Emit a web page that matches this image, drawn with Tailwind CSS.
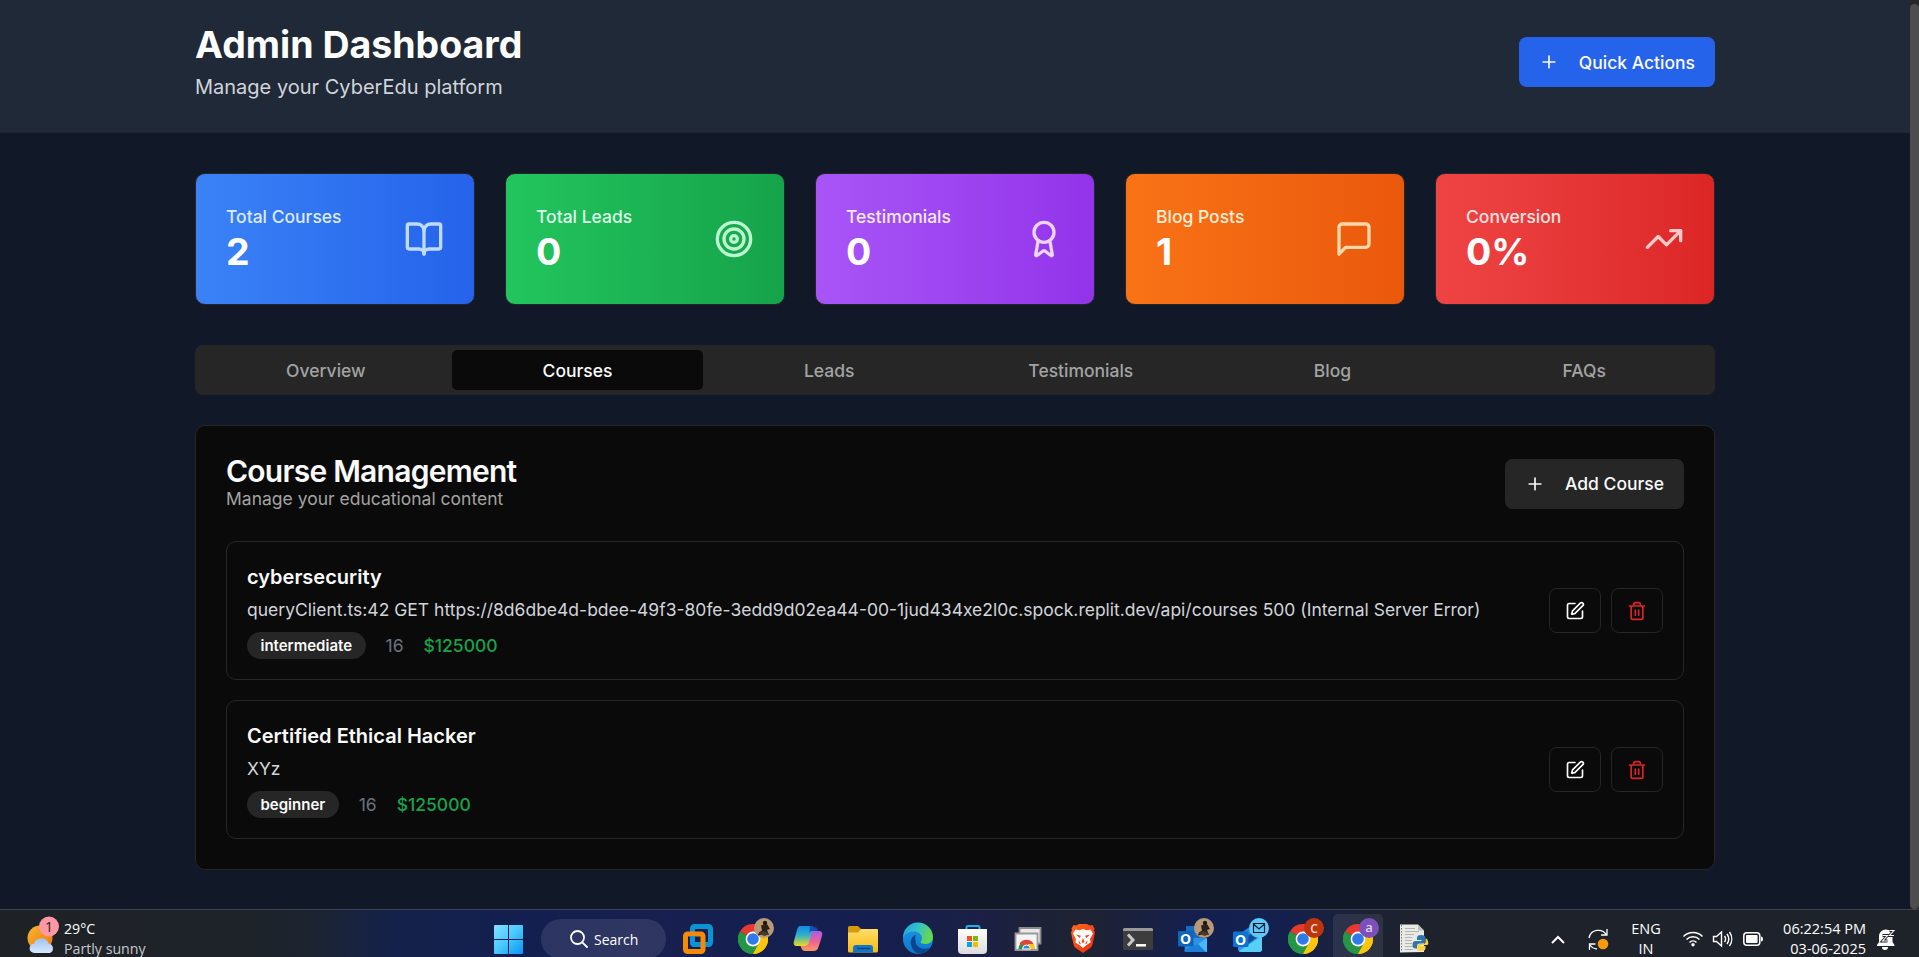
<!DOCTYPE html>
<html lang="en">
<head>
<meta charset="utf-8">
<title>Admin Dashboard</title>
<script src="https://cdn.jsdelivr.net/npm/@tailwindcss/browser@4"></script>
</head>
<body class="w-[1919px] h-[957px] overflow-hidden bg-[#111827] font-['Inter',sans-serif] text-[17.5px] leading-[25px] text-[#fafafa] flex flex-col">
<svg class="absolute size-0" aria-hidden="true">
  <defs>
    <symbol id="plus" viewBox="0 0 24 24"><path d="M5 12h14M12 5v14"/></symbol>
    <symbol id="edit" viewBox="0 0 24 24"><path d="M12 3H5a2 2 0 0 0-2 2v14a2 2 0 0 0 2 2h14a2 2 0 0 0 2-2v-7"/><path d="M18.375 2.625a1 1 0 0 1 3 3l-9.013 9.014a2 2 0 0 1-.853.505l-2.873.84a.5.5 0 0 1-.62-.62l.84-2.873a2 2 0 0 1 .506-.852z"/></symbol>
    <symbol id="trash" viewBox="0 0 24 24"><path d="M3 6h18M19 6v14c0 1-1 2-2 2H7c-1 0-2-1-2-2V6M8 6V4c0-1 1-2 2-2h4c1 0 2 1 2 2v2M10 11v6M14 11v6"/></symbol>
    <symbol id="chrome" viewBox="0 0 30 30">
      <path d="M15 15 2 7.5A15 15 0 0 1 28 7.5Z" fill="#e8392e"/>
      <path d="M15 15 28 7.5A15 15 0 0 1 15 30Z" fill="#fdc60b"/>
      <path d="M15 15 15 30A15 15 0 0 1 2 7.5Z" fill="#259645"/>
      <path d="M15 7.8H28.2A15 15 0 0 1 15 30L21.2 18.600Z" fill="#fdc60b"/>
      <path d="M2 7.5 8.800 18.600A7.200 7.200 0 0 0 21.200 18.600L15 30A15 15 0 0 1 2 7.500Z" fill="#259645"/>
      <circle cx="15" cy="15" r="7.400" fill="#fff"/><circle cx="15" cy="15" r="5.800" fill="#2f7ae8"/>
    </symbol>
    <symbol id="avatar" viewBox="0 0 20 20"><circle cx="10" cy="10" r="10" fill="#b99a78"/><circle cx="11" cy="5" r="2.200" fill="#1d1712"/><path d="M7 7.500 13 6l3 5-3 1 2 5-5-1-6 1.500 1-3 3-2z" fill="#2b211a"/><path d="M4 15.500 10 13l5 3-4 2z" fill="#4b3a2c"/></symbol>
    <linearGradient id="win" gradientUnits="userSpaceOnUse" x1="10" y1="15" x2="39" y2="44"><stop stop-color="#86e0ff"/><stop offset=".5" stop-color="#48c8fc"/><stop offset="1" stop-color="#0a93f5"/></linearGradient>
    <linearGradient id="cpA" x2="0" y2="1"><stop stop-color="#1487e8"/><stop offset=".45" stop-color="#2cb1c9"/><stop offset="1" stop-color="#f1d81e"/></linearGradient>
    <linearGradient id="cpB" x2="0" y2="1"><stop stop-color="#a55be8"/><stop offset=".5" stop-color="#ee5f9c"/><stop offset="1" stop-color="#fb9a5a"/></linearGradient>
    <linearGradient id="fold" x2="0" y2="1"><stop stop-color="#ffdd66"/><stop offset="1" stop-color="#f7b916"/></linearGradient>
    <linearGradient id="edgeA" x2="1" y2=".4"><stop stop-color="#1d9be8"/><stop offset=".5" stop-color="#35c1c9"/><stop offset="1" stop-color="#65d84e"/></linearGradient>
    <linearGradient id="edgeB" x2="0" y2="1"><stop stop-color="#1b9be0"/><stop offset="1" stop-color="#0d74d0"/></linearGradient>
    <linearGradient id="bag" x2="0" y2="1"><stop stop-color="#fdfdfd"/><stop offset="1" stop-color="#dcdcdc"/></linearGradient>
    <linearGradient id="brave" x2="1" y2="1"><stop stop-color="#ff6a1f"/><stop offset="1" stop-color="#f5260c"/></linearGradient>
    <linearGradient id="sun" x2="1" y2="1"><stop stop-color="#f7b82a"/><stop offset="1" stop-color="#ef7412"/></linearGradient>
    <linearGradient id="cloud" x2="0" y2="1"><stop stop-color="#9fc4f5"/><stop offset="1" stop-color="#d8e8fc"/></linearGradient>
    <linearGradient id="ol" x2="1" y2="1"><stop stop-color="#1c6fd0"/><stop offset="1" stop-color="#45c3f7"/></linearGradient>
  </defs>
</svg>

<div class="flex h-[909px] shrink-0">
  <div class="w-[1910px] flex flex-col">
    <header class="h-[133px] bg-[#202937] border-b border-[#262626] px-[195px] pt-[22px]">
      <div class="flex items-center justify-between">
        <div>
          <h1 class="text-[37.500px] leading-[45px] font-bold text-white">Admin Dashboard</h1>
          <p class="mt-[5px] text-xl leading-[30px] text-[#d1d5db]">Manage your CyberEdu platform</p>
        </div>
        <button class="h-[50px] w-[196px] px-5 rounded-[7.500px] bg-[#2563eb] flex items-center justify-between font-medium">
          <svg class="size-5" fill="none" stroke="currentColor" stroke-width="2" stroke-linecap="round"><use href="#plus"/></svg><span class="pt-px">Quick Actions</span>
        </button>
      </div>
    </header>

    <main class="px-[195px] pt-10">
      <section class="grid grid-cols-5 gap-[30px]">
        <div class="h-[132px] rounded-[10px] border border-[#262626] bg-linear-to-r from-[#3b82f6] to-[#2563eb] px-[30px] flex items-center justify-between">
          <div><p class="font-medium text-[#dbeafe]">Total Courses</p><p class="text-[37.500px] leading-[45px] font-bold text-white">2</p></div>
          <svg class="size-10 text-[#bfdbfe]" viewBox="0 0 24 24" fill="none" stroke="currentColor" stroke-width="2" stroke-linecap="round" stroke-linejoin="round"><path d="M12 7v14"/><path d="M3 18a1 1 0 0 1-1-1V4a1 1 0 0 1 1-1h5a4 4 0 0 1 4 4 4 4 0 0 1 4-4h5a1 1 0 0 1 1 1v13a1 1 0 0 1-1 1h-6a3 3 0 0 0-3 3 3 3 0 0 0-3-3z"/></svg>
        </div>
        <div class="h-[132px] rounded-[10px] border border-[#262626] bg-linear-to-r from-[#22c55e] to-[#16a34a] px-[30px] flex items-center justify-between">
          <div><p class="font-medium text-[#dcfce7]">Total Leads</p><p class="text-[37.500px] leading-[45px] font-bold text-white">0</p></div>
          <svg class="size-10 text-[#bbf7d0]" viewBox="0 0 24 24" fill="none" stroke="currentColor" stroke-width="2"><circle cx="12" cy="12" r="10"/><circle cx="12" cy="12" r="6"/><circle cx="12" cy="12" r="2"/></svg>
        </div>
        <div class="h-[132px] rounded-[10px] border border-[#262626] bg-linear-to-r from-[#a855f7] to-[#9333ea] px-[30px] flex items-center justify-between">
          <div><p class="font-medium text-[#f3e8ff]">Testimonials</p><p class="text-[37.500px] leading-[45px] font-bold text-white">0</p></div>
          <svg class="size-10 text-[#e9d5ff]" viewBox="0 0 24 24" fill="none" stroke="currentColor" stroke-width="2" stroke-linecap="round" stroke-linejoin="round"><path d="m15.477 12.890 1.515 8.526a.5.5 0 0 1-.81.470l-3.580-2.687a1 1 0 0 0-1.197 0l-3.586 2.686a.5.5 0 0 1-.81-.469l1.514-8.526"/><circle cx="12" cy="8" r="6"/></svg>
        </div>
        <div class="h-[132px] rounded-[10px] border border-[#262626] bg-linear-to-r from-[#f97316] to-[#ea580c] px-[30px] flex items-center justify-between">
          <div><p class="font-medium text-[#ffedd5]">Blog Posts</p><p class="text-[37.500px] leading-[45px] font-bold text-white">1</p></div>
          <svg class="size-10 text-[#fed7aa]" viewBox="0 0 24 24" fill="none" stroke="currentColor" stroke-width="2" stroke-linecap="round" stroke-linejoin="round"><path d="M21 15a2 2 0 0 1-2 2H7l-4 4V5a2 2 0 0 1 2-2h14a2 2 0 0 1 2 2z"/></svg>
        </div>
        <div class="h-[132px] rounded-[10px] border border-[#262626] bg-linear-to-r from-[#ef4444] to-[#dc2626] px-[30px] flex items-center justify-between">
          <div><p class="font-medium text-[#fee2e2]">Conversion</p><p class="text-[37.500px] leading-[45px] font-bold text-white">0%</p></div>
          <svg class="size-10 text-[#fecaca]" viewBox="0 0 24 24" fill="none" stroke="currentColor" stroke-width="2" stroke-linecap="round" stroke-linejoin="round"><path d="m22 7-8.500 8.500-5-5L2 17"/><path d="M16 7h6v6"/></svg>
        </div>
      </section>

      <nav class="mt-10 h-[50px] p-[5px] rounded-[7.500px] bg-[#262626] grid grid-cols-6 text-center font-medium text-[#a3a3a3] leading-[42px]">
        <div>Overview</div>
        <div class="h-10 rounded-[5px] bg-[#0a0a0a] text-[#fafafa]">Courses</div>
        <div>Leads</div><div>Testimonials</div><div>Blog</div><div>FAQs</div>
      </nav>

      <section class="mt-[30px] h-[445px] rounded-[10px] border border-[#262626] bg-[#0a0a0a] p-[30px]">
        <div class="h-[55px] flex items-center justify-between">
          <div>
            <h2 class="text-[30px] leading-[30px] font-semibold tracking-tight">Course Management</h2>
            <p class="text-[#a3a3a3]">Manage your educational content</p>
          </div>
          <button class="h-[50px] w-[179px] px-5 rounded-[7.500px] bg-[#262626] flex items-center justify-between font-medium">
            <svg class="size-5" fill="none" stroke="currentColor" stroke-width="2" stroke-linecap="round"><use href="#plus"/></svg>Add Course
          </button>
        </div>
        <div class="mt-[30px] flex flex-col gap-5">
          <article class="h-[139px] rounded-[10px] border border-[#262626] p-5 flex items-center justify-between">
            <div>
              <h3 class="text-xl leading-[30px] font-semibold">cybersecurity</h3>
              <p class="mt-[5px] text-[#d1d5db]">queryClient.ts:42 GET https://8d6dbe4d-bdee-49f3-80fe-3edd9d02ea44-00-1jud434xe2l0c.spock.replit.dev/api/courses 500 (Internal Server Error)</p>
              <div class="mt-[10px] flex items-center gap-5">
                <span class="h-[27px] leading-[27px] px-[13.500px] rounded-full bg-[#262626] text-[15px] font-semibold">intermediate</span>
                <span class="text-[#6b7280]">16</span><span class="font-medium text-[#16a34a]">$125000</span>
              </div>
            </div>
            <div class="flex gap-[10px]">
              <button class="w-[52px] h-[45px] rounded-[7.500px] border border-[#262626] flex items-center justify-center"><svg class="size-5" fill="none" stroke="currentColor" stroke-width="2" stroke-linecap="round" stroke-linejoin="round"><use href="#edit"/></svg></button>
              <button class="w-[52px] h-[45px] rounded-[7.500px] border border-[#262626] flex items-center justify-center text-[#dc2626]"><svg class="size-5" fill="none" stroke="currentColor" stroke-width="2" stroke-linecap="round" stroke-linejoin="round"><use href="#trash"/></svg></button>
            </div>
          </article>
          <article class="h-[139px] rounded-[10px] border border-[#262626] p-5 flex items-center justify-between">
            <div>
              <h3 class="text-xl leading-[30px] font-semibold">Certified Ethical Hacker</h3>
              <p class="mt-[5px] text-[#d1d5db]">XYz</p>
              <div class="mt-[10px] flex items-center gap-5">
                <span class="h-[27px] leading-[27px] px-[13.500px] rounded-full bg-[#262626] text-[15px] font-semibold">beginner</span>
                <span class="text-[#6b7280]">16</span><span class="font-medium text-[#16a34a]">$125000</span>
              </div>
            </div>
            <div class="flex gap-[10px]">
              <button class="w-[52px] h-[45px] rounded-[7.500px] border border-[#262626] flex items-center justify-center"><svg class="size-5" fill="none" stroke="currentColor" stroke-width="2" stroke-linecap="round" stroke-linejoin="round"><use href="#edit"/></svg></button>
              <button class="w-[52px] h-[45px] rounded-[7.500px] border border-[#262626] flex items-center justify-center text-[#dc2626]"><svg class="size-5" fill="none" stroke="currentColor" stroke-width="2" stroke-linecap="round" stroke-linejoin="round"><use href="#trash"/></svg></button>
            </div>
          </article>
        </div>
      </section>
    </main>
  </div>
  <div class="w-[9px] bg-[#262626] pt-1"><div class="h-[905px] rounded-[5px] bg-[#4d4d4d]"></div></div>
</div>

<footer class="h-12 shrink-0 border-t border-[#3c4350] bg-[linear-gradient(90deg,#1e2227_0px,#1e2329_250px,#1b2432_320px,#14224a_390px,#131f50_520px,#17204f_640px,#141f50_860px,#1b2044_980px,#1e2231_1080px,#1a2140_1140px,#131f50_1200px,#14204c_1290px,#1d2233_1370px,#1e222b_1440px,#1e2229_1919px)] flex overflow-hidden font-['Open_Sans','Noto_Sans',sans-serif] text-[14.500px] leading-5 text-white">
  <div class="w-[484px] flex">
    <svg class="w-[64px] h-[47px]" viewBox="0 0 64 47"><circle cx="40" cy="28" r="12.500" fill="url(#sun)"/><path d="M34.500 43a4.600 4.600 0 0 1-.6-9.200A8 8 0 0 1 48.800 33.500 5 5 0 0 1 50 43Z" fill="url(#cloud)"/><circle cx="49" cy="16.500" r="10" fill="#fd98a4"/><text x="49" y="21.500" text-anchor="middle" font-size="14" fill="#33151b">1</text></svg>
    <div class="pt-[9px] whitespace-nowrap text-[14.200px]"><p>29°C</p><p class="text-[#c6c8cc]">Partly sunny</p></div>
  </div>
  <svg class="w-[57px] h-[47px]" viewBox="0 0 57 47"><path fill="url(#win)" d="M10 16a1 1 0 0 1 1-1h13v14H10zM25 15h13a1 1 0 0 1 1 1v13H25zM10 30h14v14H11a1 1 0 0 1-1-1zM25 30h14v13a1 1 0 0 1-1 1H25z"/></svg>
  <div class="w-[125px] h-10 mt-[9px] rounded-full bg-white/10 flex items-center pl-[29px] gap-[6px]">
    <svg class="w-[18px] h-[18px]" viewBox="0 0 18 18" fill="none" stroke="#fff" stroke-width="1.800" stroke-linecap="round"><circle cx="7.500" cy="7.500" r="6.500"/><path d="m12.300 12.300 4.700 4.700"/></svg><span class="text-[14px] pt-[2px]">Search</span>
  </div>
  <div class="w-[5px]"></div>
  <div class="flex w-[770px]">
    <svg class="w-[55px] h-[47px]" viewBox="0 0 55 47" fill="none" stroke-width="5"><rect x="21.500" y="16.500" width="18" height="18" rx="2" stroke="#0a94d6"/><rect x="14.500" y="24" width="17.500" height="17.500" rx="2" stroke="#f58a07"/><path d="M21.500 26v7a2 2 0 0 0 2 1.500H29" stroke="#0a94d6"/></svg>
    <svg class="w-[55px] h-[47px]" viewBox="0 0 55 47"><use href="#chrome" x="12" y="14" width="30" height="30"/><use href="#avatar" x="28" y="8" width="20" height="20"/></svg>
    <svg class="w-[55px] h-[47px]" viewBox="0 0 55 47"><path d="M30 17h3.500c2.500 0 3 1.500 3.700 4h-7z" fill="#17439c"/><path d="M19 16h11c2 0 3.500 1.500 2.800 4l-4 13c-.7 2-2 3-4 3H16c-3 0-3.800-2-3-5l3-11c.7-2.500 1.500-4 3-4z" fill="url(#cpA)"/><path d="M29 16c4 0 5 2 6 5h-4c-1.500 0-2 .5-2.600 2.500z" fill="#1550b0"/><path d="M31 21h7c3 0 3.800 2 3 5l-3.500 11c-.8 2.500-2 4-5 4H24c-3 0-3.500-3-4.500-5H24c2 0 3-1 3.700-3l3-10z" fill="url(#cpB)"/></svg>
    <svg class="w-[55px] h-[47px]" viewBox="0 0 55 47"><path d="M12 17.500A1.500 1.500 0 0 1 13.500 16H22l3 3v4H12z" fill="#d69a0b"/><path d="M12 22.500h10l3-3.500h16a1 1 0 0 1 1 1v21a1.500 1.500 0 0 1-1.500 1.500h-27A1.500 1.500 0 0 1 12 41z" fill="url(#fold)"/><path d="M17 42.500V38a3 3 0 0 1 3-3h14a3 3 0 0 1 3 3v4.500z" fill="#1376c4"/><path d="M21 38.500h13" stroke="#083e78" stroke-width="1.300"/></svg>
    <svg class="w-[55px] h-[47px]" viewBox="0 0 55 47"><circle cx="27" cy="29" r="15" fill="url(#edgeB)"/><path d="M12 28A15 15 0 0 1 42 27c0 4-3 7-7 7-3.500 0-5.500-1-5.500-2 0-.8 1.500-1.500 1.500-4C31 24 27 21.500 22.500 21.500S13.500 24 12 28Z" fill="url(#edgeA)"/><path d="M24.500 24.500C21 27 19 30 20 34.500c1 5 4.500 9 9 9.300 4-.6 7-2.600 9.500-6.300-5 2.500-11 1-13-3-1.500-3-1.300-6-1-10z" fill="#0b468c"/></svg>
    <svg class="w-[55px] h-[47px]" viewBox="0 0 55 47"><path d="M20.500 20v-2.500a1.500 1.500 0 0 1 1.500-1.500h10a1.500 1.500 0 0 1 1.500 1.500V20" fill="none" stroke="#1faee8" stroke-width="2"/><path d="M12 19h29v21a4 4 0 0 1-4 4H16a4 4 0 0 1-4-4z" fill="url(#bag)"/><path d="M21 26h5v5h-5z" fill="#f25022"/><path d="M27 26h5v5h-5z" fill="#7fba00"/><path d="M21 32h5v5h-5z" fill="#00a4ef"/><path d="M27 32h5v5h-5z" fill="#ffb900"/></svg>
    <svg class="w-[55px] h-[47px]" viewBox="0 0 55 47"><path d="M18.500 18h21v15.500h-21z" fill="#e9e9e9" stroke="#8b8b8b" stroke-width="1.800"/><path d="M14.500 23.500h22V40h-22z" fill="#f4f4f4" stroke="#999" stroke-width="1.800"/><path d="M17.500 39a8 8 0 0 1 16 0z" fill="#259645"/><path d="M18.500 34a8 8 0 0 1 14 0l-7 3z" fill="#df4438"/><path d="M27 34h6a8 8 0 0 1 .5 5H27z" fill="#fdc60b"/><path d="M21.500 39a4 4 0 0 1 8 0z" fill="#3e7fe8" stroke="#fff"/></svg>
    <svg class="w-[55px] h-[47px]" viewBox="0 0 55 47"><path d="m20 15.500 3-1.500h8l3 1.500 2.500-.5 2 3.500-.5 2 1 2-2.500 12c-.5 2-1.500 3-3 4L27 43l-6.500-4.500c-1.500-1-2.500-2-3-4L15 22.500l1-2-.5-2 2-3.500z" fill="url(#brave)"/><path d="m19.500 19.500 4 .8 3.500-1.300 3.500 1.300 4-.8 2.500 4-3 5.500.7 3.500-4.200 2.500-3.500 3-3.500-3-4.200-2.500.7-3.500-3-5.500z" fill="#fff"/><path d="m20 24.500 5 1.200-1.300 2.200zM34 24.500l-5 1.200 1.300 2.200zM27 28l1.500 4L27 33l-1.500-1zM22.500 30l2.500 4-2-.5zM31.500 30 29 34l2-.5z" fill="#f4421a"/></svg>
    <svg class="w-[55px] h-[47px]" viewBox="0 0 55 47"><rect x="12" y="18" width="30" height="22" rx="1.500" fill="#3d3d3d"/><path d="M12 21v-1.500A1.500 1.500 0 0 1 13.500 18h27a1.500 1.500 0 0 1 1.500 1.500V21z" fill="#999"/><path d="m17 24.500 5 5.500-5 5.500" fill="none" stroke="#c9c9c9" stroke-width="3"/><path d="M25 35.300h10" stroke="#fff" stroke-width="2.500"/></svg>
    <svg class="w-[55px] h-[47px]" viewBox="0 0 55 47"><path d="M20 16h16v16H20z" fill="#176cc1"/><path d="M18 28h23v14H19z" fill="#2b93e6"/><path d="m41 28-13 9 13 5z" fill="#49b9f5"/><path d="M18 40 32 34l8 8H19z" fill="#1e7fd8"/><rect x="12" y="21" width="15.500" height="15.500" rx="1" fill="#0c64bd"/><text x="19.700" y="34" text-anchor="middle" font-size="14" font-weight="700" fill="#fff">O</text><use href="#avatar" x="28" y="8" width="20" height="20"/></svg>
    <svg class="w-[55px] h-[47px]" viewBox="0 0 55 47"><path d="m17 25 13-9 11 9v14a3 3 0 0 1-3 3H20a3 3 0 0 1-3-3z" fill="url(#ol)"/><path d="m24 28 13-10 4 6-14 10z" fill="#124a9d"/><path d="m41 26-23 15a3 3 0 0 0 2 1h18a3 3 0 0 0 3-3z" fill="#57d0f5"/><rect x="12" y="21.500" width="15.500" height="15.500" rx="1.500" fill="#0c73d4"/><text x="19.700" y="34.500" text-anchor="middle" font-size="14" font-weight="700" fill="#fff">O</text><circle cx="38" cy="18" r="10" fill="#5cc8fb"/><path d="M32.500 13.500h11v9h-11zM32.500 14l5.500 5 5.500-5" fill="none" stroke="#0b1b28" stroke-width="1.200"/></svg>
    <svg class="w-[55px] h-[47px]" viewBox="0 0 55 47"><use href="#chrome" x="12" y="14" width="30" height="30"/><circle cx="38" cy="18" r="10" fill="#bd350c"/><text x="38" y="22.500" text-anchor="middle" font-size="12" font-weight="600" fill="#f5d3c6">C</text></svg>
    <svg class="w-[55px] h-[47px]" viewBox="0 0 55 47"><rect x="2" y="4" width="50" height="48" rx="5" fill="#fff" fill-opacity=".08"/><use href="#chrome" x="12" y="14" width="30" height="30"/><circle cx="38" cy="18" r="10" fill="#7c50bb"/><text x="38" y="22" text-anchor="middle" font-size="13" font-weight="600" fill="#e2d2f5">a</text></svg>
    <svg class="w-[55px] h-[47px]" viewBox="0 0 55 47"><path d="M14 14.500h18l6 6V42l-24 .5z" fill="#e9e9e6"/><path d="M32 14.500v6h6z" fill="#bdbdbd"/><path d="M19 18.500h10M19 21.500h14M19 24.500h9M19 27.500h7M19 30.500h7M19 33.500h7M19 36.500h8M19 39.500h8" stroke="#b5b5b5"/><path d="M15.500 15v27" stroke="#777" stroke-dasharray="1.500 1.500"/><path d="M35 25c-3 0-4 1-4 3v2h4.500v1h-6c-2 0-3 1.500-3 4s1 3.500 3 3.500H31V36c0-1.500 1-2.500 3-2.500h3c1.500 0 2.500-1 2.500-2.500v-3c0-2-1.500-3-4.500-3z" fill="#2f76ad"/><path d="M35.500 41c3 0 4-1 4-3v-2H35v-1h6c2 0 1.500-3 0-6l-1.300-.5V31c0 2-1 3-3 3h-3c-1.500 0-2.500 1-2.500 2.500v2c0 2 1.500 2.500 4.300 2.500z" fill="#fed340"/></svg>
  </div>
  <div class="w-[183px] flex">
    <div class="w-[100px]"></div>
    <svg class="w-[83px] h-[47px]" viewBox="0 0 83 47" fill="none" stroke="#fff" stroke-width="2"><path d="m11 33 6-6 6 6" stroke-width="2"/><path d="M48 28a9.500 9.500 0 0 1 17.500-3M66 19v6h-6M56 39a9.500 9.500 0 0 1-7-4M48.500 40v-6h6" stroke-width="1.300"/><circle cx="62" cy="34" r="5.300" fill="#fb9a08" stroke="none"/></svg>
  </div>
  <div class="w-[44px] text-center pt-[9px]"><p>ENG</p><p>IN</p></div>
  <svg class="w-[97px] h-[47px]" viewBox="1668 0 97 47" fill="none" stroke="#fff" stroke-width="1.500"><path d="M1683.500 26.500a13.500 13.500 0 0 1 19 0M1686.500 29.500a9.300 9.300 0 0 1 13 0M1689.500 32.500a5 5 0 0 1 7 0"/><circle cx="1693" cy="34.800" r="1.700" fill="#fff" stroke="none"/><path d="M1713.500 26.500h3l5-4.500v14l-5-4.500h-3zM1724.500 26a5 5 0 0 1 0 6M1727 24a8.500 8.500 0 0 1 0 10M1729.500 22a12 12 0 0 1 0 14" stroke-width="1.400"/><rect x="1743.800" y="22.800" width="16" height="12.500" rx="3"/><rect x="1746" y="25" width="11.600" height="8" rx="1" fill="#fff" stroke="none"/><path d="M1761 26.500h.5q1.500.5 1.500 2.500t-1.500 2.500h-.5z" fill="#fff" stroke="none"/></svg>
  <div class="w-[101px] text-right pt-[9px] whitespace-nowrap"><p>06:22:54 PM</p><p>03-06-2025</p></div>
  <svg class="w-[53px] h-[47px]" viewBox="1866 0 53 47"><path d="M1877 36v-1l2-3v-5.500c0-4 3-7 7-7s6.500 3 6.500 7V32l2 3v1zM1882 37h6a3 3 0 0 1-6 0z" fill="#fff"/><path d="M1882.500 25.500h5l-5 5.500h5M1889.500 20.500h4.500l-4.500 5h4.500" fill="none" stroke="#1e2229" stroke-width="2.800"/><path d="M1882.500 25.500h5l-5 5.500h5M1889.500 20.500h4.500l-4.500 5h4.500" fill="none" stroke="#fff" stroke-width="1.100"/></svg>
</footer>
</body>
</html>
